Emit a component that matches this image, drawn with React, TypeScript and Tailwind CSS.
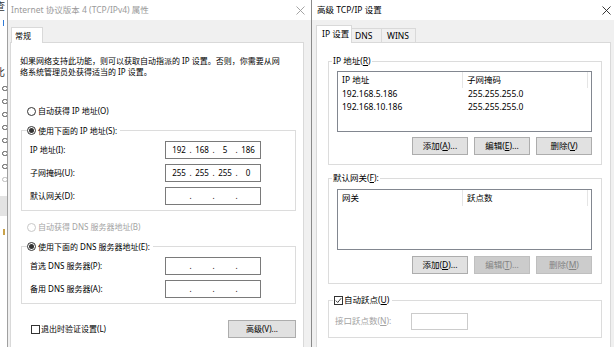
import React from "react";

const FONT = "font-[family-name:'Noto_Sans','Noto_Sans_CJK_SC',sans-serif]";

function CloseX({ dark = false }: { dark?: boolean }) {
  return (
    <svg width="9" height="9" viewBox="0 0 9 9" className="shrink-0">
      <path
        d="M0.5 0.5 L8.5 8.5 M8.5 0.5 L0.5 8.5"
        stroke={dark ? "#222222" : "#9a9a9a"}
        strokeWidth="0.9"
        fill="none"
      />
    </svg>
  );
}

function Radio({ checked = false, disabled = false }: { checked?: boolean; disabled?: boolean }) {
  return (
    <span
      className={
        "w-[9px] h-[9px] rounded-full border bg-white flex items-center justify-center shrink-0 " +
        (disabled ? "border-[#c8c8c8]" : "border-[#333333]")
      }
    >
      {checked && <span className="w-[5px] h-[5px] rounded-full bg-[#333333]" />}
    </span>
  );
}

function Check({ checked = false }: { checked?: boolean }) {
  return (
    <span className="w-[9px] h-[9px] border border-[#333333] bg-white flex items-center justify-center shrink-0">
      {checked && (
        <svg width="7" height="7" viewBox="0 0 7 7">
          <path d="M0.8 3.6 L2.7 5.5 L6.2 1.2" stroke="#222222" strokeWidth="0.9" fill="none" />
        </svg>
      )}
    </span>
  );
}

function IpBox({ v }: { v?: string[] }) {
  const parts = v ?? ["", "", "", ""];
  return (
    <div className="w-[96px] h-[18px] border border-[#7a7a7a] bg-white flex items-center pl-[3px] text-[8px] leading-none text-black">
      {parts.map((p, i) => (
        <React.Fragment key={i}>
          {i > 0 && <span className="w-[3px] flex justify-center">.</span>}
          <span className="w-[20px] text-center">{p}</span>
        </React.Fragment>
      ))}
    </div>
  );
}

function Btn({ children, disabled = false, w = "w-[56px]" }: { children: React.ReactNode; disabled?: boolean; w?: string }) {
  return (
    <div
      className={
        w +
        " h-[18px] border flex items-center justify-center leading-none " +
        (disabled
          ? "bg-[#cccccc] border-[#bfbfbf] text-[#838383]"
          : "bg-[#e1e1e1] border-[#adadad] text-black")
      }
    >
      {children}
    </div>
  );
}

function LeftStrip() {
  return (
    <div className="w-[8px] h-full bg-white border-r border-[#a0a0a0] overflow-hidden flex flex-col text-[10px] leading-[12px] text-[#333333] shrink-0">
      <span className="-ml-[5px] whitespace-nowrap">查</span>
      <div className="mt-[8px] ml-[3px] w-[1px] h-[6px] bg-[#2f7bd8]" />
      <span className="mt-[40px] -ml-[5px] whitespace-nowrap">比</span>
      <div className="mt-[8px] flex flex-col gap-[8px]">
        {[0, 1, 2, 3, 4, 5, 6].map((i) => (
          <div key={i} className="ml-[2px] w-[6px] h-[5px] rounded-full border border-[#555555] bg-white" />
        ))}
        <div className="ml-[2px] w-[6px] h-[5px] rounded-full border border-[#bbbbbb] bg-white" />
      </div>
      <div className="mt-[14px] h-[20px] bg-[#e3e3e3]" />
      <div className="mt-[13px] ml-[3px] w-[2px] h-[6px] bg-[#c9a24a]" />
    </div>
  );
}

function LeftDialog() {
  return (
    <div className="w-[303px] h-full flex flex-col bg-[#f0f0f0] shrink-0">
      <div className="h-[20px] bg-white flex items-center justify-between pl-[3px] pr-[6px] text-[8.5px] text-[#9a9a9a] shrink-0">
        <span className="whitespace-nowrap">Internet 协议版本 4 (TCP/IPv4) 属性</span>
        <CloseX />
      </div>
      <div className="flex-1 flex flex-col pl-[2px] pr-[7px] pt-[7px]">
        <div className="flex">
          <div className="relative z-10 ml-[1px] h-[16px] w-[32px] bg-white border border-b-0 border-[#d9d9d9] pl-[3px] flex items-center text-[8px] text-black">
            常规
          </div>
        </div>
        <div className="-mt-[1px] min-h-[320px] bg-white border border-[#d9d9d9] flex flex-col text-[8px] text-black">
          <div className="ml-[9px] mt-[12px] leading-[11px] whitespace-nowrap">
            如果网络支持此功能，则可以获取自动指派的 IP 设置。否则，你需要从网
            <br />
            络系统管理员处获得适当的 IP 设置。
          </div>

          <div className="mt-[28px] ml-[16px] h-[12px] flex items-center gap-[2px]">
            <Radio />
            <span>自动获得 IP 地址(O)</span>
          </div>

          <div className="mt-[13px] ml-[10px] mr-[7px] border border-[#dcdcdc] flex flex-col pb-[5px]">
            <div className="-mt-[7px] ml-[5px] h-[13px] w-fit bg-white pr-[3px] flex items-center gap-[2px]">
              <Radio checked />
              <span>使用下面的 IP 地址(S):</span>
            </div>
            <div className="mt-[4px] flex flex-col gap-[5px]">
              <div className="h-[18px] flex items-center pl-[8px]">
                <span className="w-[135px]">IP 地址(I):</span>
                <IpBox v={["192", "168", "5", "186"]} />
              </div>
              <div className="h-[18px] flex items-center pl-[8px]">
                <span className="w-[135px]">子网掩码(U):</span>
                <IpBox v={["255", "255", "255", "0"]} />
              </div>
              <div className="h-[18px] flex items-center pl-[8px]">
                <span className="w-[135px]">默认网关(D):</span>
                <IpBox />
              </div>
            </div>
          </div>

          <div className="mt-[10px] ml-[16px] h-[12px] flex items-center gap-[2px] text-[#a3a3a3]">
            <Radio disabled />
            <span>自动获得 DNS 服务器地址(B)</span>
          </div>

          <div className="mt-[13px] ml-[10px] mr-[7px] border border-[#dcdcdc] flex flex-col pb-[5px]">
            <div className="-mt-[7px] ml-[5px] h-[13px] w-fit bg-white pr-[3px] flex items-center gap-[2px]">
              <Radio checked />
              <span>使用下面的 DNS 服务器地址(E):</span>
            </div>
            <div className="mt-[4px] flex flex-col gap-[5px]">
              <div className="h-[18px] flex items-center pl-[8px]">
                <span className="w-[135px]">首选 DNS 服务器(P):</span>
                <IpBox />
              </div>
              <div className="h-[18px] flex items-center pl-[8px]">
                <span className="w-[135px]">备用 DNS 服务器(A):</span>
                <IpBox />
              </div>
            </div>
          </div>

          <div className="mt-[16px] ml-[10px] mr-[7px] flex items-center justify-between">
            <div className="pl-[10px] flex items-center gap-[1px]">
              <Check />
              <span>退出时验证设置(L)</span>
            </div>
            <Btn w="w-[68px]">高级(V)...</Btn>
          </div>
        </div>
      </div>
    </div>
  );
}

function ListView({ cols, rows }: { cols: [string, string]; rows: [string, string][] }) {
  return (
    <div className="h-[61px] border border-[#828790] bg-white flex flex-col">
      <div className="h-[16px] flex items-center shrink-0">
        <div className="w-[125px] h-full pl-[4px] flex items-center border-r border-[#e5e5e5]">{cols[0]}</div>
        <div className="w-[125px] h-full pl-[4px] flex items-center border-r border-[#e5e5e5]">{cols[1]}</div>
      </div>
      {rows.map((r, i) => (
        <div key={i} className="h-[13px] flex items-center shrink-0">
          <div className="w-[125px] pl-[4px]">{r[0]}</div>
          <div className="w-[125px] pl-[5px]">{r[1]}</div>
        </div>
      ))}
    </div>
  );
}

function RightDialog() {
  return (
    <div className="flex-1 h-full flex flex-col bg-[#f0f0f0] border-l border-[#8a8a8a]">
      <div className="h-[20px] bg-white flex items-center justify-between pl-[5px] pr-[3px] text-[8.5px] text-black shrink-0">
        <span className="whitespace-nowrap">高级 TCP/IP 设置</span>
        <CloseX dark />
      </div>
      <div className="flex-1 flex flex-col pl-[4px] pr-[3px] pt-[5px] text-[8.5px] text-black">
        <div className="flex items-end">
          <div className="relative z-10 h-[18px] w-[36px] bg-white border border-b-0 border-[#d9d9d9] pl-[5px] flex items-center whitespace-nowrap">
            IP 设置
          </div>
          <div className="h-[15px] w-[30px] border-t border-r border-[#d9d9d9] pl-[3px] flex items-center">DNS</div>
          <div className="h-[15px] w-[34px] border-t border-r border-[#d9d9d9] pl-[5px] flex items-center">WINS</div>
        </div>
        <div className="-mt-[1px] min-h-[320px] bg-white border border-[#d9d9d9] flex flex-col">
          <div className="mt-[18px] ml-[11px] mr-[8px] border border-[#dcdcdc] flex flex-col pb-[9px]">
            <div className="-mt-[7px] ml-[3px] h-[13px] w-fit bg-white px-[1px] flex items-center">
              <span>
                IP 地址(<u>R</u>)
              </span>
            </div>
            <div className="mt-[3px] ml-[8px] mr-[9px]">
              <ListView
                cols={["IP 地址", "子网掩码"]}
                rows={[
                  ["192.168.5.186", "255.255.255.0"],
                  ["192.168.10.186", "255.255.255.0"],
                ]}
              />
            </div>
            <div className="mt-[5px] mr-[9px] flex justify-end gap-[6px]">
              <Btn>
                添加(<u>A</u>)...
              </Btn>
              <Btn>
                编辑(<u>E</u>)...
              </Btn>
              <Btn>
                删除(<u>V</u>)
              </Btn>
            </div>
          </div>

          <div className="mt-[13px] ml-[11px] mr-[8px] border border-[#dcdcdc] flex flex-col pb-[9px]">
            <div className="-mt-[7px] ml-[3px] h-[13px] w-fit bg-white px-[1px] flex items-center">
              <span>
                默认网关(<u>F</u>):
              </span>
            </div>
            <div className="mt-[4px] ml-[8px] mr-[9px]">
              <ListView cols={["网关", "跃点数"]} rows={[]} />
            </div>
            <div className="mt-[6px] mr-[9px] flex justify-end gap-[6px]">
              <Btn>
                添加(<u>D</u>)...
              </Btn>
              <Btn disabled>
                编辑(<u>T</u>)...
              </Btn>
              <Btn disabled>
                删除(<u>M</u>)
              </Btn>
            </div>
          </div>

          <div className="mt-[16px] ml-[11px] mr-[8px] border border-[#dcdcdc] flex flex-col pb-[7px]">
            <div className="-mt-[7px] ml-[4px] h-[13px] w-fit bg-white pr-[3px] pl-[1px] flex items-center gap-[1px]">
              <Check checked />
              <span>
                自动跃点(<u>U</u>)
              </span>
            </div>
            <div className="mt-[6px] pl-[6px] flex items-center">
              <span className="w-[76px] text-[#a3a3a3]">
                接口跃点数(<u>N</u>):
              </span>
              <div className="w-[57px] h-[17px] border border-[#cccccc] bg-white" />
            </div>
          </div>
        </div>
      </div>
    </div>
  );
}

export default function App() {
  return (
    <div className={"w-[614px] h-[347px] overflow-hidden flex bg-white " + FONT}>
      <LeftStrip />
      <LeftDialog />
      <RightDialog />
    </div>
  );
}
